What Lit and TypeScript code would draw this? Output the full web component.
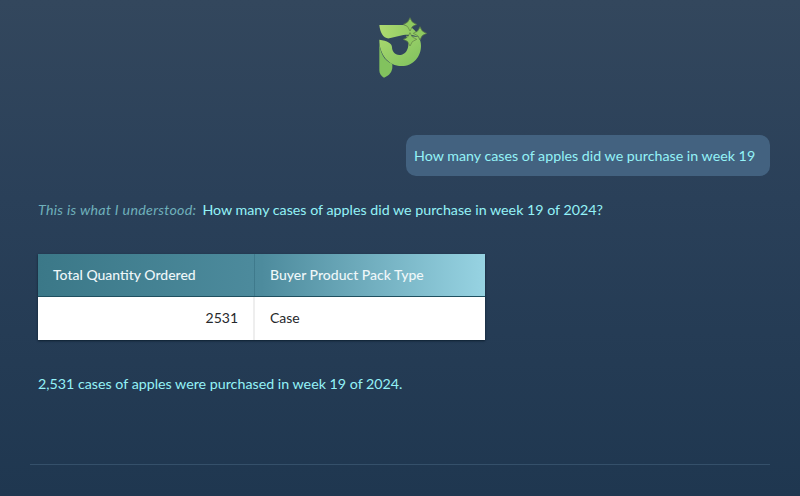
import { LitElement, html, css } from "lit";
import { customElement } from "lit/decorators.js";

@customElement("app-root")
export class AppRoot extends LitElement {
  static styles = css`
    :host {
      display: block;
      height: 496px;
      overflow: hidden;
      background: linear-gradient(180deg, #33475d 0%, #2a4059 40%, #1f3750 100%);
      font-family: "Lato", "Noto Sans", sans-serif;
      font-size: 14.25px;
      color: #94f2f7;
    }

    .page {
      display: flex;
      flex-direction: column;
      height: 496px;
      box-sizing: border-box;
      padding: 5px 30px 0;
    }

    .logo {
      display: block;
      width: 80px;
      height: 85px;
      align-self: center;
    }

    .bubble {
      align-self: flex-end;
      box-sizing: border-box;
      width: 364px;
      height: 41px;
      margin-top: 45px;
      padding: 0 8px;
      display: flex;
      align-items: center;
      border-radius: 10px;
      background: #436280;
    }

    .understood {
      display: flex;
      gap: 6px;
      margin: 25px 0 0 8px;
      line-height: 18px;
    }

    .understood em {
      color: #6fb0bb;
      letter-spacing: 0.28px;
    }

    .result {
      width: 447px;
      margin: 35px 0 0 8px;
      box-shadow: 0 1px 2px #0d1f30;
      font-size: 14px;
    }

    .row {
      display: grid;
      grid-template-columns: 217px 1fr;
    }

    .head {
      height: 42px;
      background: linear-gradient(90deg, #3b7888 0%, #4d8b9d 50%, #97d3e2 100%);
      border-bottom: 1px solid #1f5060;
      color: #eef7f9;
      font-weight: 500;
    }

    .head div {
      display: flex;
      align-items: center;
      padding: 0 15px 2px;
      box-sizing: border-box;
    }

    .head div:first-child {
      border-right: 1px solid #3f7a8c;
    }

    .body {
      height: 43px;
      background: #fff;
      color: #26282b;
    }

    .body div {
      display: flex;
      align-items: center;
      padding: 0 15px 2px;
      box-sizing: border-box;
    }

    .body .num {
      justify-content: flex-end;
      border-right: 2px solid #eeeeee;
    }

    .answer {
      margin: 35px 0 0 8px;
      line-height: 18px;
    }

    .rule {
      margin-top: auto;
      margin-bottom: 31px;
      height: 1px;
      background: #35506a;
    }
  `;

  render() {
    return html`
      <div class="page">
        <svg class="logo" viewBox="0 0 240 255">
          <defs>
            <linearGradient id="bowl" x1="0" y1="0" x2="1" y2="1">
              <stop offset="0" stop-color="#a9d86e" />
              <stop offset="1" stop-color="#7fc15e" />
            </linearGradient>
            <linearGradient id="band" x1="0" y1="0" x2="1" y2="0">
              <stop offset="0" stop-color="#aeda70" />
              <stop offset="1" stop-color="#8cc862" />
            </linearGradient>
          </defs>
          <path
            d="M58 104C58 148 85 183 125 183C160 183 183 155 183 122C183 112 180 104 176 96L138 92C152 112 146 150 118 150C104 150 96 138 96 126C96 115 82 107 58 104Z"
            fill="url(#bowl)"
          />
          <path
            d="M58 104C58 140 72 168 97 176V186C97 200 88 212 72 218C63 213 58 205 58 196Z"
            fill="#82c25e"
          />
          <path
            d="M58 60H128C150 60 168 74 176 96C160 90 148 88 130 90L88 100C70 102 60 82 58 60Z"
            fill="url(#band)"
          />
          <g fill="#8fca60" stroke="#5d7f45" stroke-width="2">
            <path d="M150 38Q154 54 170 58Q154 62 150 78Q146 62 130 58Q146 54 150 38Z" />
            <path d="M180 65Q184 81 200 85Q184 89 180 105Q176 89 160 85Q176 81 180 65Z" />
            <path d="M150 83Q154 99 170 103Q154 107 150 123Q146 107 130 103Q146 99 150 83Z" />
          </g>
        </svg>

        <div class="bubble">How many cases of apples did we purchase in week 19</div>

        <div class="understood">
          <em>This is what I understood:</em>
          <span>How many cases of apples did we purchase in week 19 of 2024?</span>
        </div>

        <div class="result">
          <div class="row head">
            <div>Total Quantity Ordered</div>
            <div>Buyer Product Pack Type</div>
          </div>
          <div class="row body">
            <div class="num">2531</div>
            <div>Case</div>
          </div>
        </div>

        <div class="answer">2,531 cases of apples were purchased in week 19 of 2024.</div>

        <div class="rule"></div>
      </div>
    `;
  }
}
